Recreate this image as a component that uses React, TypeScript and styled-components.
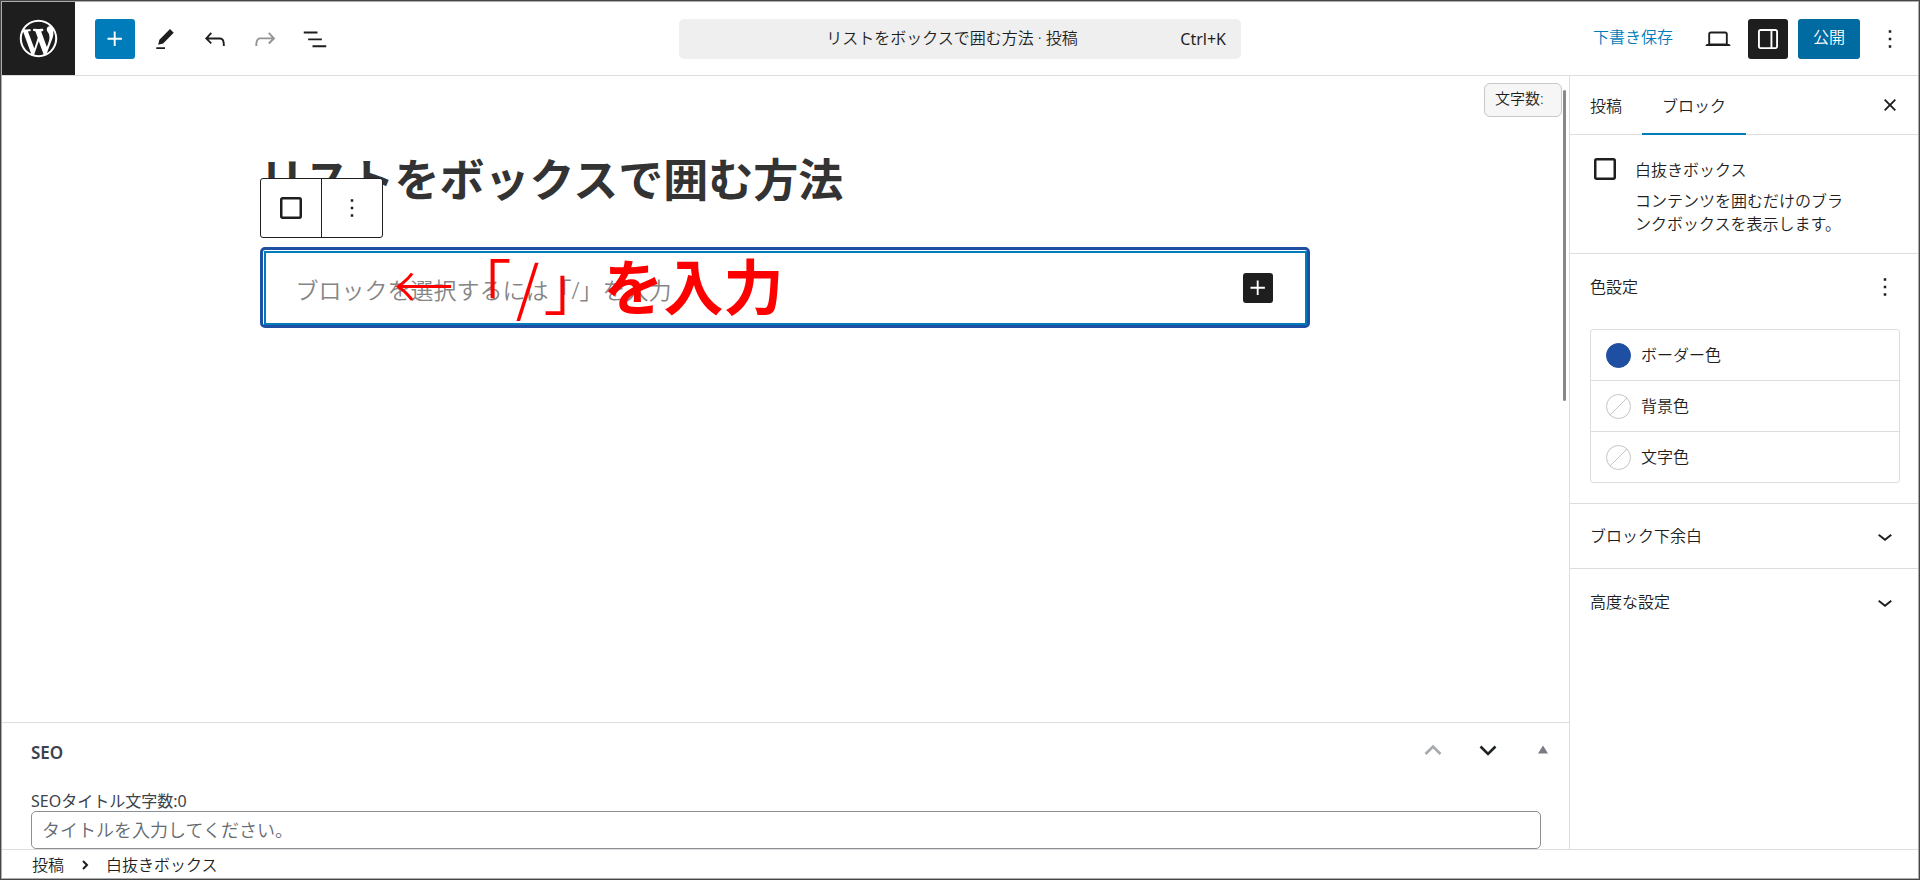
import React from "react";
import styled, { createGlobalStyle } from "styled-components";

const GlobalStyle = createGlobalStyle`
  *, *::before, *::after { box-sizing: border-box; }
  body {
    margin: 0;
    color: #1e1e1e;
    font-family: "Noto Sans", "Noto Sans CJK JP", sans-serif;
    font-size: 16px;
    font-weight: 350;
    line-height: 24px;
  }
  button, input { font: inherit; color: inherit; }
  h1, h2, h3, p, ul { margin: 0; padding: 0; font-weight: inherit; font-size: inherit; }
`;

const line = "#ddd";

const Frame = styled.div`
  display: flex;
  flex-direction: column;
  min-height: 100vh;
  padding: 1px;
  border: 1px solid #464646;
  background: #adadad;
`;

const Header = styled.header`
  display: grid;
  grid-template-columns: 1fr minmax(0, 562px) 1fr;
  align-items: center;
  background: #fff;
  border-bottom: 1px solid ${line};
`;

const HeaderStart = styled.div`
  display: flex;
  align-items: center;
  gap: 10px;
`;

const HeaderEnd = styled(HeaderStart)`
  justify-content: flex-end;
  padding-right: 8px;
`;

const SiteLink = styled.a`
  display: flex;
  align-items: center;
  justify-content: center;
  width: 73px;
  height: 73px;
  margin-right: 10px;
  background: #1e1e1e;
  color: #fff;
`;

const IconButton = styled.button<{ $tone?: "plain" | "primary" | "dark"; $size?: number }>`
  display: flex;
  flex: none;
  align-items: center;
  justify-content: center;
  width: ${(p) => p.$size ?? 40}px;
  height: ${(p) => p.$size ?? 40}px;
  padding: 0;
  border: 0;
  border-radius: 3px;
  background: ${(p) => (p.$tone === "primary" ? "#007cba" : p.$tone === "dark" ? "#1e1e1e" : "none")};
  color: ${(p) => (p.$tone === "primary" || p.$tone === "dark" ? "#fff" : "#1e1e1e")};
  &:disabled { color: #949494; }
`;

const CommandBar = styled.button`
  display: grid;
  grid-template-columns: 1fr auto 1fr;
  align-items: center;
  height: 40px;
  padding: 0 15px;
  border: 0;
  border-radius: 5px;
  background: #efefef;
`;

const CommandTitle = styled.span`
  grid-column: 2;
  margin-right: 16px;
  padding-bottom: 2px;
`;

const Shortcut = styled.span`
  justify-self: end;
  font-weight: 400;
`;

const TextButton = styled.button`
  height: 40px;
  padding: 0 15px 3px;
  border: 0;
  background: none;
  color: #007cba;
`;

const PublishButton = styled.button`
  height: 40px;
  padding: 0 15px 3px;
  border: 0;
  border-radius: 3px;
  background: #006ba1;
  color: #fff;
`;

const Body = styled.div`
  display: grid;
  flex: 1;
  grid-template-columns: minmax(0, 1fr) 349px;
  background: #fff;
`;

const Main = styled.main`
  display: flex;
  flex-direction: column;
  min-width: 0;
`;

const Canvas = styled.section`
  position: relative;
  flex: 1;
  padding: 74px 2px 74px 0;
`;

const WordCount = styled.div`
  position: absolute;
  top: 7px;
  right: 7px;
  width: 78px;
  padding: 2px 10px 6px;
  border: 1px solid #c8c8c8;
  border-radius: 6px;
  background: #f6f6f6;
  font-size: 15px;
`;

const ScrollThumb = styled.div`
  position: absolute;
  top: 14px;
  right: 3px;
  width: 3px;
  height: 311px;
  border-radius: 2px;
  background: #888;
`;

const Post = styled.div`
  width: 1050px;
  max-width: 100%;
  margin: 0 auto;
`;

const PostTitle = styled.h1`
  color: #333;
  font-size: 45px;
  font-weight: 700;
  line-height: 60px;
`;

const BlockArea = styled.div`
  position: relative;
  margin-top: 37px;
`;

const BlockToolbar = styled.div`
  position: absolute;
  bottom: calc(100% + 9px);
  left: 0;
  display: flex;
  border: 1px solid #1e1e1e;
  border-radius: 3px;
  background: #fff;
`;

const ToolbarButton = styled.button`
  display: flex;
  align-items: center;
  justify-content: center;
  width: 60px;
  height: 58px;
  padding: 0;
  border: 0;
  background: none;
  & + & {
    width: 61px;
    border-left: 1px solid #1e1e1e;
  }
`;

const BlankBox = styled.div`
  padding: 1px 0 0 1px;
  border: 3px solid #1e4fa2;
  border-radius: 5px;
`;

const BlankBoxInner = styled.div`
  display: flex;
  align-items: center;
  height: 74px;
  padding: 0 32px 0 30px;
  border: 2px solid #007cba;
`;

const BlockInput = styled.input`
  flex: 1;
  min-width: 0;
  padding: 4px 0 0;
  border: 0;
  outline: 0;
  background: none;
  font-size: 23px;
  line-height: 36px;
  &::placeholder { color: #858585; opacity: 1; }
`;

const Annotation = styled.p`
  position: absolute;
  top: 0;
  left: 134px;
  display: flex;
  align-items: center;
  height: 74px;
  color: #f00;
  font-family: "Noto Sans CJK JP", sans-serif;
  font-size: 60px;
  line-height: 74px;
  white-space: nowrap;
  pointer-events: none;
`;

const Arrow = styled.span`
  width: 58px;
  font-weight: 300;
`;

const Slash = styled.span`
  display: inline-block;
  width: 32px;
  text-align: center;
`;

const Strong = styled.strong`
  font-weight: 700;
`;

const MetaBox = styled.section`
  padding: 0 28px 0 29px;
  border-top: 1px solid ${line};
  color: #3c434a;
`;

const MetaHead = styled.div`
  display: flex;
  align-items: center;
  height: 60px;
  margin-bottom: 8px;
`;

const MetaTitle = styled.h2`
  flex: 1;
  font-size: 17px;
  font-weight: 600;
`;

const MetaActions = styled.div`
  display: flex;
  align-items: center;
  gap: 25px;
  margin: -6px -17px 0 0;
`;

const Field = styled.div`
  display: flex;
  flex-direction: column;
  font-weight: 400;
  line-height: 20px;
`;

const FieldInput = styled.input`
  width: 100%;
  height: 38px;
  padding: 0 10px;
  border: 1px solid #8c8f94;
  border-radius: 5px;
  font-size: 18px;
  font-weight: 350;
  &::placeholder { color: #646970; opacity: 1; }
`;

const Sidebar = styled.aside`
  border-left: 1px solid ${line};
`;

const TabBar = styled.div`
  display: flex;
  align-items: center;
  height: 59px;
  padding-right: 8px;
  border-bottom: 1px solid ${line};
`;

const Tab = styled.button<{ $active?: boolean }>`
  height: 59px;
  padding: 4px 20px 0;
  border: 0;
  border-bottom: 2px solid ${(p) => (p.$active ? "#007cba" : "transparent")};
  background: none;
`;

const TabClose = styled(IconButton)`
  margin-left: auto;
`;

const Card = styled.div`
  display: flex;
  gap: 15px;
  height: 119px;
  padding: 19px 65px 0 20px;
  border-bottom: 1px solid ${line};
`;

const CardIcon = styled.div`
  flex: none;
  width: 30px;
  height: 30px;
  padding: 4px 0 0 4px;
`;

const CardTitle = styled.h2`
  margin: 4px 0 8px;
`;

const CardText = styled.p`
  line-height: 23px;
`;

const Panel = styled.section`
  padding: 0 18px 20px 20px;
  border-bottom: 1px solid ${line};
`;

const PanelHead = styled.div`
  display: flex;
  align-items: center;
  justify-content: space-between;
  height: 65px;
  margin-bottom: 10px;
`;

const ColorList = styled.ul`
  list-style: none;
  border: 1px solid ${line};
  border-radius: 3px;
`;

const ColorItem = styled.li`
  & + & { border-top: 1px solid ${line}; }
`;

const ColorButton = styled.button`
  display: flex;
  align-items: center;
  gap: 10px;
  width: 100%;
  height: 50px;
  padding: 0 15px;
  border: 0;
  background: none;
`;

const Accordion = styled.button<{ $last?: boolean }>`
  display: flex;
  align-items: center;
  justify-content: space-between;
  width: 100%;
  height: 65px;
  padding: 0 18px 0 20px;
  border: 0;
  border-bottom: ${(p) => (p.$last ? "0" : `1px solid ${line}`)};
  background: none;
`;

const Footer = styled.footer`
  display: flex;
  align-items: center;
  height: 29px;
  padding: 2px 30px 0;
  border-top: 1px solid ${line};
  background: #fff;
`;

const Crumbs = styled.nav`
  display: flex;
  align-items: center;
  gap: 6px;
`;

const Crumb = styled.button`
  padding: 0;
  border: 0;
  background: none;
`;

const icons = {
  plus: "M11 12.5V17.5H12.5V12.5H17.5V11H12.5V6H11V11H6V12.5H11Z",
  pencil: "m19 7-3-3-8.5 8.5-1 4 4-1L19 7Zm-7 11.5H5V20h7v-1.5Z",
  undo: "M18.3 11.7c-.6-.6-1.4-.9-2.3-.9H6.7l2.9-3.3-1.1-1-4.5 5L8.5 16l1-1-2.7-2.7H16c.5 0 .9.2 1.3.5 1 1 1 3.4 1 4.5v.3h1.5v-.2c0-1.5 0-4.3-1.5-5.7z",
  redo: "M15.6 6.5l-1.1 1 2.9 3.3H8c-.9 0-1.7.3-2.3.9-1.4 1.5-1.4 4.2-1.4 5.6v.2h1.5v-.3c0-1.1 0-3.5 1-4.5.3-.3.7-.5 1.3-.5h9.2L14.5 15l1.1 1.1 4.6-4.6-4.6-5z",
  list: "M3 6h11v1.5H3V6Zm3.5 5.5h11V13h-11v-1.5ZM21 17H10v1.5h11V17Z",
  desktop:
    "M20.5 16h-.7V8c0-1.1-.9-2-2-2H6.2c-1.1 0-2 .9-2 2v8h-.7c-.8 0-1.5.7-1.5 1.5h20c0-.8-.7-1.5-1.5-1.5zM5.7 8c0-.3.2-.5.5-.5h11.6c.3 0 .5.2.5.5v7.6H5.7V8z",
  drawer:
    "M18 4H6c-1.1 0-2 .9-2 2v12c0 1.1.9 2 2 2h12c1.1 0 2-.9 2-2V6c0-1.1-.9-2-2-2zm-4 14.5H6c-.3 0-.5-.2-.5-.5V6c0-.3.2-.5.5-.5h8v13zm4.5-.5c0 .3-.2.5-.5.5h-2.5v-13H18c.3 0 .5.2.5.5v12z",
  more: "M13 19h-2v-2h2v2zm0-6h-2v-2h2v2zm0-6h-2V5h2v2z",
  close:
    "M12 13.06l3.712 3.713 1.061-1.06L13.061 12l3.712-3.712-1.06-1.06L12 10.938 8.288 7.227l-1.061 1.06L10.939 12l-3.712 3.712 1.06 1.061L12 13.061z",
  chevronDown: "M17.5 11.6L12 16l-5.5-4.4.9-1.2L12 14l4.5-3.6 1 1.2z",
};

const Icon = ({ name, size = 30 }: { name: keyof typeof icons; size?: number }) => (
  <svg width={size} height={size} viewBox="0 0 24 24" fill="currentColor" aria-hidden="true">
    <path d={icons[name]} />
  </svg>
);

const WordPressLogo = () => (
  <svg width="45" height="45" viewBox="-2 -2 24 24" fill="currentColor" aria-hidden="true">
    <path d="M20 10c0-5.51-4.49-10-10-10C4.48 0 0 4.49 0 10c0 5.52 4.48 10 10 10 5.51 0 10-4.48 10-10zM7.78 15.37L4.37 6.22c.55-.02 1.17-.08 1.17-.08.5-.06.44-1.13-.06-1.11 0 0-1.45.11-2.37.11-.18 0-.37 0-.58-.01C4.12 2.69 6.87 1.11 10 1.11c2.33 0 4.45.87 6.05 2.34-.68-.11-1.65.39-1.65 1.58 0 .74.45 1.36.9 2.1.35.61.55 1.36.55 2.46 0 1.49-1.4 5-1.4 5l-3.03-8.37c.54-.02.82-.17.82-.17.5-.05.44-1.25-.06-1.22 0 0-1.44.12-2.38.12-.87 0-2.33-.12-2.33-.12-.5-.03-.56 1.2-.06 1.22l.92.08 1.26 3.41zM17.41 10c.24-.64.74-1.87.43-4.25.7 1.29 1.05 2.71 1.05 4.25 0 3.29-1.73 6.24-4.4 7.78.97-2.59 1.94-5.2 2.92-7.78zM6.1 18.09C3.12 16.65 1.11 13.53 1.11 10c0-1.3.23-2.48.72-3.59C3.25 10.3 4.67 14.2 6.1 18.09zm4.03-6.63l2.58 6.98c-.86.29-1.76.45-2.71.45-.79 0-1.57-.11-2.29-.33.81-2.38 1.62-4.74 2.42-7.1z" />
  </svg>
);

const SquareIcon = () => (
  <svg width="22" height="22" viewBox="0 0 22 22" fill="none" stroke="#1e1e1e" strokeWidth="2.5" aria-hidden="true">
    <rect x="1.25" y="1.25" width="19.5" height="19.5" rx="1.5" />
  </svg>
);

const CrumbChevron = () => (
  <svg width="30" height="24" viewBox="0 0 30 24" fill="none" stroke="currentColor" strokeWidth="2" aria-hidden="true">
    <path d="M13 8 17 12 13 16" />
  </svg>
);

const OrderChevron = ({ up }: { up?: boolean }) => (
  <svg width="30" height="30" viewBox="0 0 30 30" fill="none" stroke={up ? "#a7aaad" : "#1d2327"} strokeWidth="2.6" aria-hidden="true">
    <path d={up ? "M7.5 19 15 11.5 22.5 19" : "M7.5 11.5 15 19 22.5 11.5"} />
  </svg>
);

const Triangle = () => (
  <svg width="30" height="30" viewBox="0 0 30 30" fill="#787c82" aria-hidden="true">
    <path d="M15 10.500 20 18.500H10z" />
  </svg>
);

const Swatch = ({ color }: { color?: string }) => (
  <svg width="25" height="25" viewBox="0 0 25 25" fill={color ?? "#fff"} stroke={color ?? "#c4c4c4"} aria-hidden="true">
    <circle cx="12.500" cy="12.500" r="12" />
    {!color && <path d="M4 21 21 4" />}
  </svg>
);

const colors: { label: string; value?: string }[] = [
  { label: "ボーダー色", value: "#1e4fa2" },
  { label: "背景色" },
  { label: "文字色" },
];

export default function App() {
  return (
    <>
      <GlobalStyle />
      <Frame>
        <Header>
          <HeaderStart>
            <SiteLink href="#" aria-label="WordPress"><WordPressLogo /></SiteLink>
            <IconButton $tone="primary" aria-label="ブロックを追加"><Icon name="plus" /></IconButton>
            <IconButton aria-label="ツール"><Icon name="pencil" /></IconButton>
            <IconButton aria-label="元に戻す"><Icon name="undo" /></IconButton>
            <IconButton aria-label="やり直す" disabled><Icon name="redo" /></IconButton>
            <IconButton aria-label="リスト表示"><Icon name="list" /></IconButton>
          </HeaderStart>
          <CommandBar>
            <CommandTitle>リストをボックスで囲む方法 · 投稿</CommandTitle>
            <Shortcut>Ctrl+K</Shortcut>
          </CommandBar>
          <HeaderEnd>
            <TextButton>下書き保存</TextButton>
            <IconButton aria-label="表示"><Icon name="desktop" /></IconButton>
            <IconButton $tone="dark" aria-label="設定"><Icon name="drawer" /></IconButton>
            <PublishButton>公開</PublishButton>
            <IconButton aria-label="オプション"><Icon name="more" /></IconButton>
          </HeaderEnd>
        </Header>

        <Body>
          <Main>
            <Canvas>
              <WordCount>文字数:</WordCount>
              <ScrollThumb />
              <Post>
                <PostTitle>リストをボックスで囲む方法</PostTitle>
                <BlockArea>
                  <BlankBox>
                    <BlankBoxInner>
                      <BlockInput aria-label="ブロック" placeholder="ブロックを選択するには「/」を入力" />
                      <IconButton $tone="dark" $size={30} aria-label="ブロックを追加"><Icon name="plus" /></IconButton>
                    </BlankBoxInner>
                  </BlankBox>
                  <Annotation>
                    <Arrow>←</Arrow>
                    <span>「<Slash>/</Slash>」</span>
                    <Strong>を入力</Strong>
                  </Annotation>
                  <BlockToolbar>
                    <ToolbarButton aria-label="白抜きボックス"><SquareIcon /></ToolbarButton>
                    <ToolbarButton aria-label="オプション"><Icon name="more" /></ToolbarButton>
                  </BlockToolbar>
                </BlockArea>
              </Post>
            </Canvas>

            <MetaBox>
              <MetaHead>
                <MetaTitle>SEO</MetaTitle>
                <MetaActions>
                  <IconButton $size={30} aria-label="上に移動"><OrderChevron up /></IconButton>
                  <IconButton $size={30} aria-label="下に移動"><OrderChevron /></IconButton>
                  <IconButton $size={30} aria-label="パネルを切り替え"><Triangle /></IconButton>
                </MetaActions>
              </MetaHead>
              <Field>
                <label htmlFor="seo-title">SEOタイトル文字数:0</label>
                <FieldInput id="seo-title" type="text" placeholder="タイトルを入力してください。" />
              </Field>
            </MetaBox>
          </Main>

          <Sidebar>
            <TabBar>
              <Tab>投稿</Tab>
              <Tab $active>ブロック</Tab>
              <TabClose aria-label="閉じる"><Icon name="close" /></TabClose>
            </TabBar>
            <Card>
              <CardIcon><SquareIcon /></CardIcon>
              <div>
                <CardTitle>白抜きボックス</CardTitle>
                <CardText>コンテンツを囲むだけのブランクボックスを表示します。</CardText>
              </div>
            </Card>
            <Panel>
              <PanelHead>
                <h2>色設定</h2>
                <IconButton $size={30} aria-label="色設定のオプション"><Icon name="more" /></IconButton>
              </PanelHead>
              <ColorList>
                {colors.map((c) => (
                  <ColorItem key={c.label}>
                    <ColorButton><Swatch color={c.value} />{c.label}</ColorButton>
                  </ColorItem>
                ))}
              </ColorList>
            </Panel>
            <Accordion>ブロック下余白<Icon name="chevronDown" /></Accordion>
            <Accordion $last>高度な設定<Icon name="chevronDown" /></Accordion>
          </Sidebar>
        </Body>

        <Footer>
          <Crumbs aria-label="パンくず">
            <Crumb>投稿</Crumb>
            <CrumbChevron />
            <Crumb>白抜きボックス</Crumb>
          </Crumbs>
        </Footer>
      </Frame>
    </>
  );
}
